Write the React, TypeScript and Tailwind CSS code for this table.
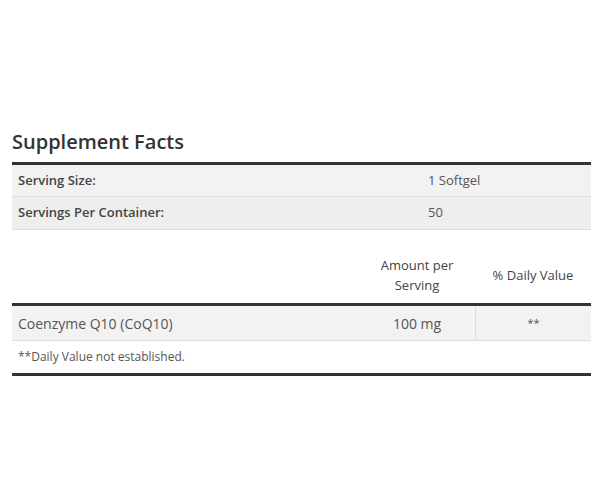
export default function App() {
  return (
    <div className="min-h-[500px] bg-white pt-[128px] pl-3 text-[#444]" style={{ fontFamily: "'Open Sans', 'Noto Sans', sans-serif" }}>
      <div className="w-[579px]">
        <h2 className="text-[20px] font-semibold leading-[28px] text-[#333] mb-[6px]">Supplement Facts</h2>

        <div className="border-t-[3px] border-[#333]">
          <div className="grid grid-cols-[410px_1fr] h-[32px] items-center bg-[#f2f2f2] border-b border-[#ddd] text-[13px]">
            <div className="pl-[6px] font-semibold">Serving Size:</div>
            <div className="pl-[6px] text-[#555]">1 Softgel</div>
          </div>
          <div className="grid grid-cols-[410px_1fr] h-[33px] items-center bg-[#eeeeee] border-b border-[#ddd] text-[13px]">
            <div className="pl-[6px] font-semibold">Servings Per Container:</div>
            <div className="pl-[6px] text-[#555]">50</div>
          </div>
        </div>

        <div className="mt-[17px]">
          <div className="grid grid-cols-[347px_116px_116px] h-[56px] items-center text-[13px] font-medium leading-[20px]">
            <div></div>
            <div className="text-center">Amount per<br />Serving</div>
            <div className="text-center">% Daily Value</div>
          </div>
          <div className="border-t-[3px] border-[#333]">
            <div className="grid grid-cols-[347px_116px_116px] h-[35px] items-stretch bg-[#f2f2f2] border-b border-[#ddd] text-[14px] text-[#555]">
              <div className="pl-[6px] flex items-center">Coenzyme Q10 (CoQ10)</div>
              <div className="flex items-center justify-center">100 mg</div>
              <div className="flex items-center justify-center border-l border-[#ddd] text-[11px]">**</div>
            </div>
            <div className="h-[35px] flex items-center pl-[6px] text-[12px] text-[#555] border-b-[3px] border-[#333]">
              **Daily Value not established.
            </div>
          </div>
        </div>
      </div>
    </div>
  );
}
